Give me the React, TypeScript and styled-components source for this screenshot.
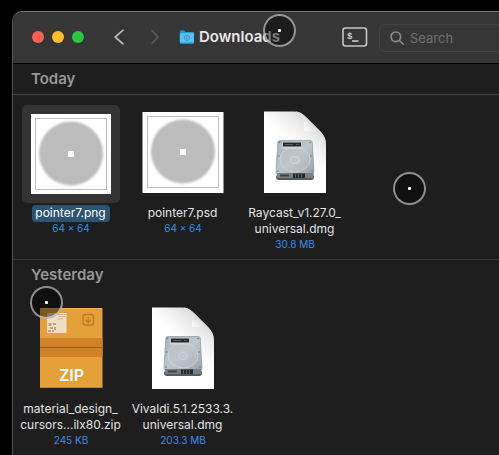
import React from "react";
import styled, { createGlobalStyle } from "styled-components";

const GlobalStyle = createGlobalStyle`
  * { box-sizing: border-box; }
  body {
    margin: 0;
    background: #000;
    font-family: Inter, "Liberation Sans", sans-serif;
    overflow: hidden;
  }
  button { font: inherit; color: inherit; background: none; border: 0; padding: 0; }
  svg { display: block; flex: none; }
`;

const Desktop = styled.div`
  position: relative;
  min-height: 100vh;
  padding: 11px 0 0 12px;
  display: flex;
  overflow: hidden;
`;

const FinderWindow = styled.main`
  flex: 1;
  min-width: 0;
  background: #1e1e1e;
  border: solid #555;
  border-width: 1px 0 0 1px;
  border-top-color: #707070;
  border-top-left-radius: 10px;
  overflow: hidden;
`;

const Toolbar = styled.header`
  display: flex;
  align-items: center;
  height: 52px;
  padding-left: 19px;
  background: #363636;
  border-bottom: 1px solid #000;
`;

const Lights = styled.div`
  display: flex;
  gap: 8px;
  margin: 0 23px 2px 0;
`;

const Light = styled.button<{ $color: string }>`
  width: 12px;
  height: 12px;
  border-radius: 50%;
  background: ${(p) => p.$color};
`;

const NavButtons = styled.nav`
  display: flex;
  gap: 12px;
  margin: 0 12px 2px 0;
`;

const NavButton = styled.button`
  display: grid;
  place-items: center;
  width: 24px;
  height: 24px;
  color: #b8b8b8;
  &:disabled { color: #5c5c5c; }
`;

const Location = styled.div`
  display: flex;
  align-items: center;
  gap: 4px;
  flex: 0 0 163px;
  margin-bottom: 2px;
`;

const Title = styled.h1`
  margin: 0;
  font-size: 15px;
  line-height: 20px;
  font-weight: 600;
  color: #e6e6e6;
`;

const ToolButton = styled.button`
  margin: 0 11px 2px 0;
`;

const SearchBox = styled.label`
  flex: 1 0 140px;
  display: flex;
  align-items: center;
  gap: 6px;
  height: 28px;
  padding-left: 10px;
  border: 1px solid #424242;
  border-radius: 6px;
  color: #8b8b8b;
`;

const SearchInput = styled.input`
  flex: 1;
  min-width: 0;
  padding: 0;
  border: 0;
  outline: 0;
  background: none;
  font: 13px/20px Inter, sans-serif;
  color: #ddd;
  &::placeholder { color: #707070; opacity: 1; }
`;

const Group = styled.section`
  & + & { border-top: 1px solid #3c3c3c; }
`;

const GroupTitle = styled.h2<{ $ruled: boolean }>`
  margin: 0;
  height: 31px;
  padding-left: 18px;
  font-size: 15px;
  line-height: 30px;
  font-weight: 600;
  color: #979797;
  border-bottom: 1px solid ${(p) => (p.$ruled ? "#444" : "transparent")};
`;

const FileGrid = styled.ul`
  display: grid;
  grid-template-columns: repeat(auto-fill, 112px);
  margin: 0;
  padding: 10px 0 9px 2px;
  list-style: none;
`;

const FileButton = styled.button`
  display: flex;
  flex-direction: column;
  align-items: center;
  width: 100%;
`;

const Tile = styled.span<{ $selected?: boolean }>`
  display: flex;
  justify-content: center;
  width: 98px;
  height: 98px;
  padding-top: 6px;
  border-radius: 5px;
  background: ${(p) => (p.$selected ? "#343434" : "transparent")};
`;

const FileName = styled.span<{ $selected?: boolean }>`
  margin-top: 2px;
  padding: 0 4px 1px 3px;
  border-radius: 4px;
  font-size: 12px;
  line-height: 16px;
  white-space: nowrap;
  color: ${(p) => (p.$selected ? "#fff" : "#e2e2e2")};
  background: ${(p) => (p.$selected ? "#2c5370" : "transparent")};
`;

const FileSize = styled.span`
  font-size: 10px;
  line-height: 12px;
  color: #3b8be6;
`;

const Pointer = styled.span<{ $x: number; $y: number }>`
  position: absolute;
  left: ${(p) => p.$x}px;
  top: ${(p) => p.$y}px;
  display: grid;
  place-items: center;
  width: 33px;
  height: 33px;
  border: 2px solid rgba(180, 180, 180, 0.75);
  border-radius: 50%;
  background: rgba(0, 0, 0, 0.45);
  background-clip: padding-box;
  pointer-events: none;
  &::after {
    content: "";
    width: 3px;
    height: 3px;
    border-radius: 1px;
    background: #fff;
  }
`;

const Chevron = ({ flip }: { flip?: boolean }) => (
  <svg width="12" height="16" viewBox="0 0 12 16" fill="none" stroke="currentColor" strokeWidth="1.7" strokeLinecap="round" strokeLinejoin="round">
    <path d={flip ? "M3 1.500 9 8l-6 6.500" : "M10 1.200 2.200 8l7.800 6.800"} />
  </svg>
);

const FolderIcon = () => (
  <svg width="16" height="14" viewBox="0 0 16 14">
    <path d="M1 1.500Q1 .5 2 .5H5L6.500 2H14Q15 2 15 3V5H1Z" fill="#249bd0" />
    <rect x=".8" y="3.200" width="14.200" height="10.300" rx="1" fill="#55c2f3" />
    <path d="M1 13h14" stroke="#2594c8" />
    <circle cx="8" cy="7.800" r="2.600" fill="#6ab4da" stroke="#3b98ca" />
    <path d="M8 6.300v2.500M7 8l1 1 1-1" fill="none" stroke="#3b98ca" strokeWidth=".7" />
  </svg>
);

const TerminalIcon = () => (
  <svg width="26" height="20" viewBox="0 0 26 20">
    <rect x="1" y="1" width="23.500" height="18" rx="2.500" fill="none" stroke="#c6c6c6" strokeWidth="1.600" />
    <text x="5" y="12" fontFamily="Liberation Mono, monospace" fontWeight="700" fontSize="9" fill="#d2d2d2">$</text>
    <path d="M10 14h6.500" stroke="#d2d2d2" strokeWidth="1.600" />
  </svg>
);

const SearchIcon = () => (
  <svg width="14" height="14" viewBox="0 0 14 14" fill="none" stroke="currentColor" strokeWidth="1.600" strokeLinecap="round">
    <circle cx="5.800" cy="5.800" r="4.800" />
    <path d="m9.500 9.500 3.700 3.700" />
  </svg>
);

const PointerPreview = ({ psd }: { psd?: boolean }) => (
  <svg width="82" height="88" viewBox="0 0 82 88">
    <defs>
      <filter id={psd ? "softPsd" : "softPng"}>
        <feGaussianBlur stdDeviation="1" />
      </filter>
    </defs>
    <g transform={psd ? "translate(0 -2)" : undefined}>
      <rect x={psd ? 0.5 : 1} y="3" width={psd ? 81 : 80} height={psd ? 81 : 80} fill="#fff" />
      <rect x="5.500" y="7.500" width="71" height="71" fill="none" stroke="#bdbdbd" />
      <circle cx="41" cy="42.500" r="32" fill="#bcbcbc" filter={`url(#${psd ? "softPsd" : "softPng"})`} />
      <rect x="38" y="40" width="6" height="6" rx="1" fill="#fff" />
    </g>
  </svg>
);

const DiskImage = ({ id }: { id: string }) => (
  <svg width="82" height="88" viewBox="0 0 82 88">
    <defs>
      <linearGradient id={`${id}page`} x1=".9" y1="0" x2=".5" y2=".6">
        <stop offset="0" stopColor="#c4c4c4" />
        <stop offset=".45" stopColor="#ececec" />
        <stop offset=".8" stopColor="#fff" />
      </linearGradient>
      <linearGradient id={`${id}fold`} x1="0" y1="1" x2="1" y2="0">
        <stop offset="0" stopColor="#fff" />
        <stop offset=".4" stopColor="#fafafa" />
        <stop offset=".6" stopColor="#d8d8d8" />
      </linearGradient>
      <linearGradient id={`${id}disk`} x1="0" y1="0" x2="1" y2="1">
        <stop offset="0" stopColor="#aab6bc" />
        <stop offset=".5" stopColor="#bcc7cc" />
        <stop offset="1" stopColor="#98a4aa" />
      </linearGradient>
    </defs>
    <path d="M10 .5H40C46 .5 49 3.500 53 7L65 19C69.500 23.500 72 27 72 34V82H10Z" fill={`url(#${id}page)`} />
    <path d="M41 .5C48 2 50.500 7 50 20 62 19 70 23 72 33 71.500 27 69 23 65 19L53 7C49 3 46 .5 41 .5Z" fill={`url(#${id}fold)`} />
    <path d="M22.500 64.500H60V66Q60 69 57 69H25Q22 69 22 66Z" fill="#555a5e" />
    <path d="M25.500 29.500H56Q58 29.500 58.200 31L60 61Q60 63 58 63H24Q22 63 22 61L23.800 31Q24 29.500 25.500 29.500Z" fill={`url(#${id}disk)`} stroke="#8b969d" strokeWidth=".7" />
    <path d="M23 62H59.500V67H23Z" fill="#777f84" />
    <path d="M39 62.500H51V67H39Z" fill="#25292c" />
    <path d="M41.500 63v4M44.500 63v4M47.500 63v4" stroke="#858b8e" strokeWidth=".6" />
    <path d="M26 64.500h9" stroke="#3e4447" strokeWidth="2" />
    <ellipse cx="41" cy="48.500" rx="15" ry="12.500" fill="#bdc6cb" fillOpacity=".4" stroke="#d2dadd" strokeWidth=".8" />
    <ellipse cx="41" cy="49" rx="4.500" ry="3.500" fill="#bfc8cd" stroke="#d5dcdf" strokeWidth=".7" />
    <rect x="28.500" y="31" width="19" height="6.500" fill="#d0d7da" />
    <rect x="29" y="31.500" width="18" height="4" fill="#25292c" />
    <path d="M31 33.500h8M42 33.500h3" stroke="#666d70" strokeWidth=".8" />
    <g fill="#566168">
      <circle cx="25.500" cy="31.500" r=".7" /><circle cx="56" cy="31.500" r=".7" />
      <circle cx="24.800" cy="45" r=".7" /><circle cx="57" cy="45" r=".7" />
      <circle cx="24" cy="60" r=".7" /><circle cx="58" cy="60" r=".7" />
    </g>
  </svg>
);

const ZipIcon = () => (
  <svg width="82" height="88" viewBox="0 0 82 88">
    <rect x="10" y="1" width="62.500" height="80" rx="1" fill="#e5a03a" />
    <path d="M10.500 1.500h61.500" stroke="#f0b359" />
    <rect x="10" y="31" width="62.500" height="19" fill="#d28226" />
    <path d="M10 40.500h62.500" stroke="#9a5a18" strokeWidth="1.200" />
    <path d="M10 80.500h62.500" stroke="#c77d24" />
    <rect x="17" y="6" width="19.500" height="20" fill="#f1dfc4" />
    <path d="M27 7.500h8.500M28 9.500h7.500M28 12h5" stroke="#c9b498" strokeWidth=".9" />
    <g fill="#b5a48c">
      <path d="M18.500 16h3v3h-3zM23 16h3v2h-3zM20 20h3v2h-3zM24 20h2v3h-2zM18 23h3v2h-3zM22 23h2v2h-2z" />
    </g>
    <g fill="none" stroke="#bd7922" strokeWidth="1.400">
      <rect x="53" y="7.500" width="10.500" height="10.500" rx="2" />
      <path d="M58.250 10v5.500M55.700 13l2.550 2.600L60.800 13" />
    </g>
    <text x="41.500" y="74" textAnchor="middle" fontFamily="Inter, sans-serif" fontSize="16" fontWeight="600" fill="#fff">ZIP</text>
  </svg>
);

type FileEntry = {
  lines: string[];
  size: string;
  icon: React.ReactNode;
  selected?: boolean;
};

const groups: { title: string; ruled: boolean; files: FileEntry[] }[] = [
  {
    title: "Today",
    ruled: true,
    files: [
      { lines: ["pointer7.png"], size: "64 × 64", icon: <PointerPreview />, selected: true },
      { lines: ["pointer7.psd"], size: "64 × 64", icon: <PointerPreview psd /> },
      { lines: ["Raycast_v1.27.0_", "universal.dmg"], size: "30.8 MB", icon: <DiskImage id="raycast" /> },
    ],
  },
  {
    title: "Yesterday",
    ruled: false,
    files: [
      { lines: ["material_design_", "cursors...ilx80.zip"], size: "245 KB", icon: <ZipIcon /> },
      { lines: ["Vivaldi.5.1.2533.3.", "universal.dmg"], size: "203.3 MB", icon: <DiskImage id="vivaldi" /> },
    ],
  },
];

const FileItem = ({ file }: { file: FileEntry }) => (
  <li>
    <FileButton type="button" aria-pressed={!!file.selected}>
      <Tile $selected={file.selected}>{file.icon}</Tile>
      <FileName $selected={file.selected}>
        {file.lines.map((line, i) => (
          <React.Fragment key={line}>
            {i > 0 && <br />}
            {line}
          </React.Fragment>
        ))}
      </FileName>
      <FileSize>{file.size}</FileSize>
    </FileButton>
  </li>
);

export default function App() {
  return (
    <>
      <GlobalStyle />
      <Desktop>
        <FinderWindow>
          <Toolbar>
            <Lights>
              <Light type="button" $color="#ff5f57" aria-label="Close" />
              <Light type="button" $color="#febc2e" aria-label="Minimize" />
              <Light type="button" $color="#28c840" aria-label="Zoom" />
            </Lights>
            <NavButtons>
              <NavButton type="button" aria-label="Back"><Chevron /></NavButton>
              <NavButton type="button" aria-label="Forward" disabled><Chevron flip /></NavButton>
            </NavButtons>
            <Location>
              <FolderIcon />
              <Title>Downloads</Title>
            </Location>
            <ToolButton type="button" aria-label="Open terminal"><TerminalIcon /></ToolButton>
            <SearchBox>
              <SearchIcon />
              <SearchInput type="text" placeholder="Search" aria-label="Search" />
            </SearchBox>
          </Toolbar>
          {groups.map((group) => (
            <Group key={group.title}>
              <GroupTitle $ruled={group.ruled}>{group.title}</GroupTitle>
              <FileGrid>
                {group.files.map((file) => (
                  <FileItem key={file.lines[0]} file={file} />
                ))}
              </FileGrid>
            </Group>
          ))}
        </FinderWindow>
        <Pointer $x={263} $y={14} />
        <Pointer $x={393} $y={172} />
        <Pointer $x={30} $y={286} />
      </Desktop>
    </>
  );
}
